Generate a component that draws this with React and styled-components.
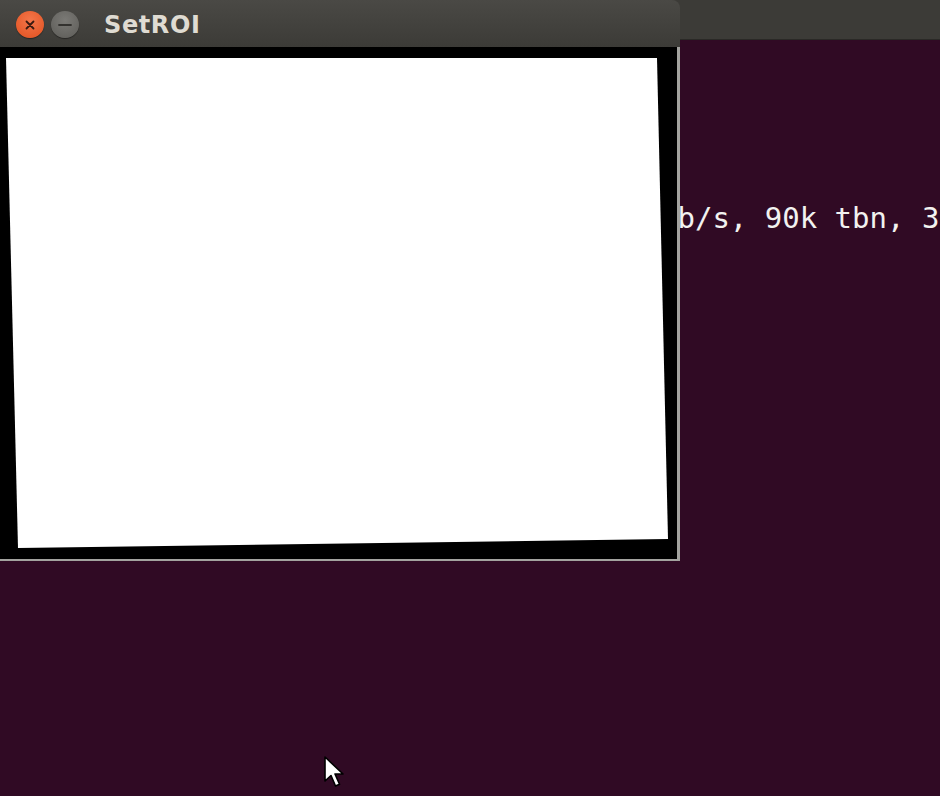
import React from "react";
import styled, { createGlobalStyle } from "styled-components";

const GlobalStyle = createGlobalStyle`
  html, body {
    margin: 0;
    padding: 0;
    background: #300a24;
  }
  body {
    font-family: "DejaVu Sans", sans-serif;
  }
`;

const Desktop = styled.div`
  position: relative;
  width: 940px;
  height: 796px;
  overflow: hidden;
  background: #300a24;
`;

const Terminal = styled.div`
  display: flex;
  flex-direction: column;
  height: 100%;
`;

const TerminalBar = styled.div`
  height: 40px;
  flex-shrink: 0;
  background: #3c3b37;
  border-bottom: 1px solid #2a2926;
  box-sizing: border-box;
`;

const TerminalBody = styled.div`
  flex: 1;
  padding: 161px 0 0 660px;
  font-family: "DejaVu Sans Mono", monospace;
  font-size: 29px;
  line-height: 34px;
  color: #f2f2f0;
  white-space: pre;
`;

const Window = styled.div`
  position: absolute;
  left: 0;
  top: 0;
  width: 680px;
  display: flex;
  flex-direction: column;
`;

const TitleBar = styled.div`
  height: 47px;
  display: flex;
  align-items: center;
  gap: 7px;
  padding: 2px 0 0 16px;
  box-sizing: border-box;
  background: linear-gradient(#4a4945, #3c3b37);
  border-top-right-radius: 8px;
`;

const WinButton = styled.div`
  width: 28px;
  height: 27px;
  border-radius: 50%;
  display: flex;
  align-items: center;
  justify-content: center;
  background: ${(p) =>
    p.$close
      ? "radial-gradient(circle at 50% 35%, #f4764a, #e0501f)"
      : "radial-gradient(circle at 50% 35%, #7b7a76, #5c5b57)"};
  box-shadow: 0 1px 1px rgba(0, 0, 0, 0.4);
`;

const Title = styled.span`
  margin-left: 18px;
  font-family: "DejaVu Sans", sans-serif;
  font-weight: bold;
  font-size: 24px;
  color: #dfdbd2;
  letter-spacing: 0.6px;
`;

const Canvas = styled.div`
  height: 514px;
  background: #000;
  border-right: 3px solid #a3a39f;
  border-bottom: 2px solid #a3a39f;
  box-sizing: border-box;
`;

const Cursor = styled.svg`
  position: absolute;
  left: 323px;
  top: 755px;
`;

export default function App() {
  return (
    <>
      <GlobalStyle />
      <Desktop>
        <Terminal>
          <TerminalBar />
          <TerminalBody>kb/s, 90k tbn, 30k tbc</TerminalBody>
        </Terminal>

        <Window>
          <TitleBar>
            <WinButton $close>
              <svg width="12" height="12" viewBox="0 0 12 12">
                <path d="M2.5 2.5 L9.5 9.5 M9.5 2.5 L2.5 9.5" stroke="#3a1a10" strokeWidth="1.8" strokeLinecap="round" />
              </svg>
            </WinButton>
            <WinButton>
              <svg width="14" height="4" viewBox="0 0 14 4">
                <path d="M1 2 H13" stroke="#33322f" strokeWidth="1.8" strokeLinecap="round" />
              </svg>
            </WinButton>
            <Title>SetROI</Title>
          </TitleBar>
          <Canvas>
            <svg width="677" height="512" viewBox="0 0 677 512">
              <polygon points="6,11 657,11 668,492 18,501" fill="#ffffff" />
            </svg>
          </Canvas>
        </Window>

        <Cursor width="24" height="34" viewBox="0 0 24 34">
          <path
            d="M2 2 L2 26 L8 20.5 L12.5 31 L16.5 29.3 L12 19 L20 19 Z"
            fill="#ffffff"
            stroke="#000000"
            strokeWidth="1.6"
            strokeLinejoin="round"
          />
        </Cursor>
      </Desktop>
    </>
  );
}
